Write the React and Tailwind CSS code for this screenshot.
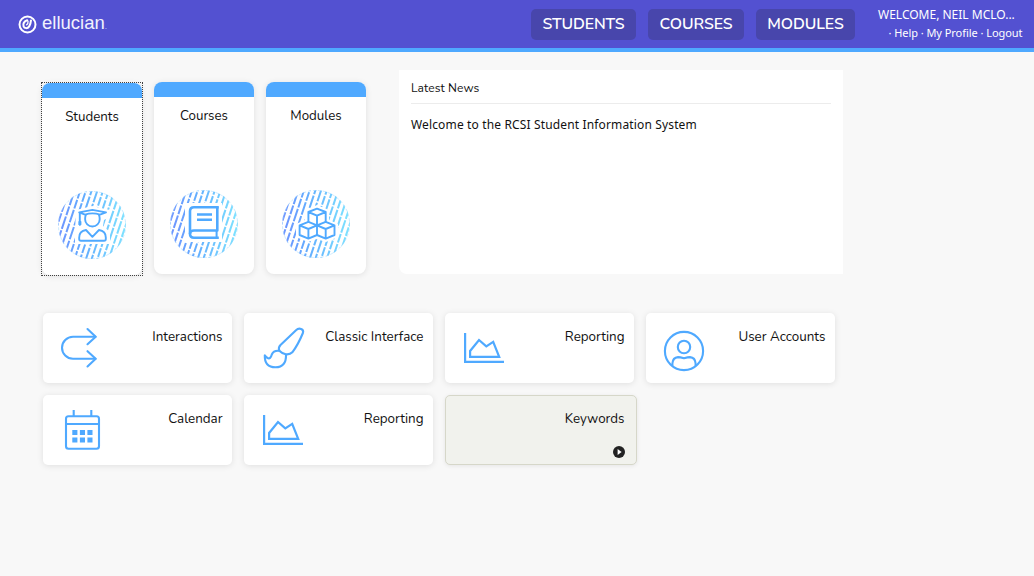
import React from "react";

const stroke = { fill: "none", stroke: "#4fa9ff", strokeLinecap: "round", strokeLinejoin: "round" };

const STRIPES = Array.from({ length: 17 }, (_, i) => i);

function Badge({ id, clear, children }) {
  return (
    <svg viewBox="0 0 68 68" className="h-[68px] w-[68px]">
      <defs>
        <linearGradient id={`${id}-fade`} gradientUnits="userSpaceOnUse" x1="0" y1="0" x2="68" y2="0">
          <stop offset="0" stopColor="#6f93ff" />
          <stop offset="0.4" stopColor="#62aeff" />
          <stop offset="1" stopColor="#7fe4ff" />
        </linearGradient>
        <clipPath id={`${id}-clip`}>
          <circle cx="34" cy="34" r="34" />
        </clipPath>
        <mask id={`${id}-mask`} maskUnits="userSpaceOnUse" x="0" y="0" width="68" height="68">
          {STRIPES.map((i) => (
            <path
              key={i}
              d={`M${i * 5.7} -2L${i * 5.7 - 24} 70`}
              stroke="white"
              strokeWidth="2"
              strokeDasharray="13 1.5 9 1.5"
              strokeDashoffset={(i * 7) % 25}
            />
          ))}
        </mask>
      </defs>
      <g clipPath={`url(#${id}-clip)`}>
        <rect width="68" height="68" fill={`url(#${id}-fade)`} mask={`url(#${id}-mask)`} />
      </g>
      <circle cx="34" cy="34" r="33.6" fill="none" stroke="#a9dcff" strokeWidth="0.6" strokeDasharray="3 2" />
      <path d={clear} fill="white" />
      {children}
    </svg>
  );
}

function StudentBadge() {
  return (
    <Badge id="student" clear="M34 15L52 19V26L46 29L45 35L52 41V53H17V40L18 19Z">
      <g {...stroke} strokeWidth="1.9">
        <path d="M27 23.6L21.2 21.4L34.4 18.9L48 21.4L42 23.6M27 23.6Q34.4 21.2 42 23.6" />
        <path d="M27.8 24.2Q27.1 25.6 27.1 28.2A7.3 7.3 0 0 0 41.7 28.2Q41.7 25.6 41 24.2" />
        <path d="M21.8 22V33.8" />
        <path d="M28 39Q21.2 40 21.2 46.5V48Q21.2 49.8 23 49.8H46Q47.8 49.8 47.8 48V46.5Q47.8 40 41 39L34.4 45.8Z" />
      </g>
      <rect x="20.4" y="30" width="3" height="4.2" rx="0.8" fill="#4fa9ff" />
    </Badge>
  );
}

function BookBadge() {
  return (
    <Badge id="book" clear="M15 13H52V52H15Z">
      <g {...stroke} strokeLinecap="butt" strokeWidth="2.6">
        <path d="M48.8 17.3H24Q20 17.3 20 21.3V44Q20 47.7 24 47.7H48.8" />
        <path d="M47.3 17.3V40.5H24Q20 40.5 20 44" />
        <path d="M46.6 40.5V47" strokeWidth="2" />
        <path d="M27 24.5H42M27 29.8H42" strokeWidth="2.4" />
      </g>
    </Badge>
  );
}

function CubesBadge() {
  return (
    <Badge id="cubes" clear="M35 15L47 20V30L56 34V47L44 52L35 49L26 52L14 47V34L23 30V20Z">
      <g {...stroke} strokeWidth="1.9">
        <path d="M26.4 32V22L35 18.6L43.7 22V32M26.4 22L35 25.6L43.7 22M35 25.6V35" />
        <path d="M17.6 35.4L26.4 31.8L35 35.4V45L26.4 48.6L17.6 45ZM17.6 35.4L26.4 39L35 35.4M26.4 39V48.6" />
        <path d="M35 35.4L43.7 31.8L52.5 35.4V45L43.7 48.6L35 45M35 35.4L43.7 39L52.5 35.4M43.7 39V48.6" />
      </g>
    </Badge>
  );
}

const icons = {
  interactions: (
    <g {...stroke} strokeWidth="2.1">
      <path d="M52.5 23.7H30A11 11 0 0 0 30 45.7H52.5" />
      <path d="M44.5 16L52.7 23.7L44.5 31.2M44.5 38.2L52.7 45.7L44.5 53.5" />
    </g>
  ),
  brush: (
    <g {...stroke} strokeWidth="2.1">
      <path d="M35.3 37.8Q34 34.5 36.5 32L52 17.2C55 14.3 60.3 15.8 58.9 20Q54 32 48.3 39.3Q46 41.8 41.7 41.3Q38 40.5 35.3 37.8Z" />
      <path d="M35.3 37.8Q29.5 37.2 27.8 41.5Q26.5 46.5 23.5 45Q21.8 44 20.8 42.3Q20.3 54.2 31.5 54.3Q42.4 54 42 41.7" />
    </g>
  ),
  chart: (
    <g {...stroke} strokeLinecap="butt" strokeLinejoin="miter" strokeWidth="2.2">
      <path d="M20.1 20V48.8H59" />
      <path d="M25.1 43.9V38L34 27L41.3 33.4L48.2 28.9L54.2 43.9Z" />
    </g>
  ),
  user: (
    <g {...stroke} strokeWidth="2.1">
      <circle cx="38" cy="38" r="19.1" />
      <circle cx="38" cy="34" r="6.2" />
      <path d="M26.4 52.5V50.5Q26.8 44.5 32 44.1Q34 44.1 38 45.3Q42 44.1 44 44.1Q49.2 44.5 49.6 50.5V52.5" />
    </g>
  ),
  calendar: (
    <g {...stroke} strokeLinecap="butt" strokeWidth="2.1">
      <rect x="23" y="21.2" width="33" height="32.6" rx="2.5" />
      <path d="M23 29H56M30.7 15V21M48.3 15V21" />
      <path d="M29.3 37.6H34.4M36.9 37.6H42M44.4 37.6H49.5M29.3 44.9H34.4M36.9 44.9H42M44.4 44.9H49.5" strokeWidth="5" />
    </g>
  ),
};

const sections = [
  { label: "Students", Icon: StudentBadge, focused: true },
  { label: "Courses", Icon: BookBadge },
  { label: "Modules", Icon: CubesBadge },
];

const tiles = [
  { label: "Interactions", icon: "interactions" },
  { label: "Classic Interface", icon: "brush" },
  { label: "Reporting", icon: "chart" },
  { label: "User Accounts", icon: "user" },
  { label: "Calendar", icon: "calendar" },
  { label: "Reporting", icon: "chart" },
];

const cardShadow = "shadow-[0_1px_6px_rgba(0,0,0,0.1)]";

function SectionCard({ label, Icon, focused }) {
  const card = (
    <div className={`flex h-[192px] w-[100px] flex-col items-center overflow-hidden rounded-lg bg-white ${cardShadow}`}>
      <div className="h-[15px] w-full shrink-0 bg-[#4fa9ff]" />
      <div className="mt-[10px] text-[13.3px] leading-[18px]">{label}</div>
      <div className="mt-[65px]">
        <Icon />
      </div>
    </div>
  );
  return focused ? (
    <div className="h-[194px] w-[102px] border border-dotted border-[#444]">{card}</div>
  ) : (
    card
  );
}

function Tile({ label, icon }) {
  return (
    <div className={`flex h-[70px] w-[189px] justify-between rounded-[5px] bg-white pr-[9.5px] ${cardShadow}`}>
      <svg viewBox="0 0 70 70" className="h-[70px] w-[70px] shrink-0">
        {icons[icon]}
      </svg>
      <span className="mt-[15px] text-[13.4px] leading-[18px] whitespace-nowrap">{label}</span>
    </div>
  );
}

export default function App() {
  return (
    <div className="h-[576px] w-[1034px] overflow-hidden bg-[#f8f8f8] font-['Nunito','Lato',sans-serif] text-[#111]">
      <header className="flex h-[52px] items-start border-b-4 border-[#4fa9ff] bg-[#5351d1] text-white">
        <div className="flex h-[48px] w-[531px] items-center pl-[18px]">
          <svg viewBox="0 0 19 19" className="h-[19px] w-[19px]" fill="none" stroke="white" strokeLinecap="round">
            <circle cx="9.5" cy="9.5" r="8" strokeWidth="2" />
            <path d="M9.2 5.3C6 6.5 4.9 9 5.6 11.4C6.4 13.6 9.6 13.8 11.2 11.4C12.3 9.6 12.8 7.6 13 5.4" strokeWidth="2" />
            <path d="M8.6 9.8C9.8 9.2 10.2 8 10 6.2" strokeWidth="1.3" />
          </svg>
          <span className="ml-[5px] font-['Liberation_Sans',sans-serif] text-[18.5px] leading-[24px] text-[#f1f1fd]">
            ellucian<span className="text-[9px] opacity-60">.</span>
          </span>
        </div>
        <nav className="mt-[9px] flex gap-3 text-[15.8px] leading-[30px] font-semibold tracking-[-0.1px]">
          <a className="h-[31px] w-[105px] rounded-[5px] bg-[#4846ac] text-center">STUDENTS</a>
          <a className="h-[31px] w-[96px] rounded-[5px] bg-[#4846ac] text-center">COURSES</a>
          <a className="h-[31px] w-[99px] rounded-[5px] bg-[#4846ac] text-center">MODULES</a>
        </nav>
        <div className="ml-[23px] flex w-[144.5px] flex-col pt-[6px] font-['Noto_Sans',sans-serif] whitespace-nowrap">
          <span className="text-[12px] leading-[18px]">WELCOME, NEIL MCLO...</span>
          <span className="self-end text-[11px] leading-[18px] tracking-[-0.05px]">· Help · My Profile · Logout</span>
        </div>
      </header>

      <main>
        <div className="flex pt-[18px] pl-[41px]">
          <div className="flex w-[358px] gap-3 pt-3">
            {sections.map((s, i) => (
              <div key={s.label} className={i === 1 ? "-ml-px" : ""}>
                <SectionCard {...s} />
              </div>
            ))}
          </div>
          <section className="h-[204px] w-[444px] rounded-bl-lg bg-white px-3">
            <h2 className="h-[34px] border-b border-[#ececec] pt-[9px] text-[12px] leading-[18px] tracking-[0.1px]">
              Latest News
            </h2>
            <p className="mt-[12px] font-['Noto_Sans',sans-serif] text-[12px] leading-[18px] tracking-[0.145px]">
              Welcome to the RCSI Student Information System
            </p>
          </section>
        </div>

        <div className="mt-[37px] ml-[43px] grid grid-cols-[repeat(4,189px)] gap-3">
          {tiles.map((t, i) => (
            <Tile key={i} {...t} />
          ))}
          <div className="flex h-[70px] w-[192px] flex-col items-end justify-between rounded-[5px] border border-[#d6d7c9] bg-[#f1f2ed] pt-[14px] pr-[11.5px] pb-[6px] shadow-[0_1px_4px_rgba(0,0,0,0.08)]">
            <span className="text-[13.35px] leading-[18px]">Keywords</span>
            <svg viewBox="0 0 12 12" className="h-[12px] w-[12px]">
              <circle cx="6" cy="6" r="6" fill="#222" />
              <path d="M4.6 3L8.6 6L4.6 9Z" fill="white" />
            </svg>
          </div>
        </div>
      </main>
    </div>
  );
}
